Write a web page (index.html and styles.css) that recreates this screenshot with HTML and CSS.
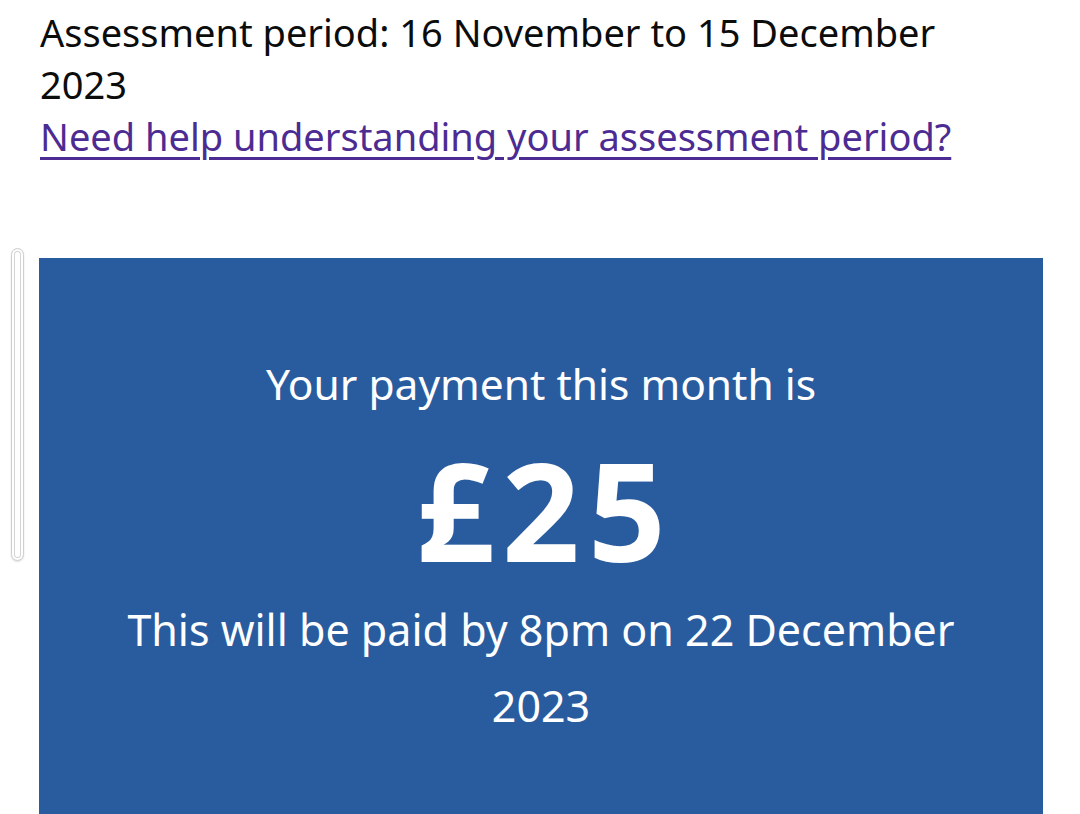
FILE: index.html
```html
<!DOCTYPE html>
<html lang="en">
<head>
<meta charset="utf-8">
<title>Your payment</title>
<link rel="stylesheet" href="styles.css">
</head>
<body>
<div class="scroll-thumb" aria-hidden="true"></div>
<main class="page">
  <p class="period">Assessment period: 16 November to 15 December 2023<br><a class="link" href="#">Need help understanding your assessment period?</a></p>
  <section class="panel">
    <p class="panel-lead">Your payment this month is</p>
    <p class="panel-amount">£25</p>
    <p class="panel-body">This will be paid by 8pm on 22 December 2023</p>
  </section>
</main>
</body>
</html>
```
FILE: styles.css
```css
html, body {
  margin: 0;
  padding: 0;
  background: #ffffff;
}
body {
  font-family: "Noto Sans", "Open Sans", sans-serif;
  color: #0b0c0c;
  overflow: hidden;
}
.page {
  padding: 6px 37px 0 39px;
}
.period {
  margin: 0 0 0 1px;
  max-width: 950px;
  font-size: 38px;
  line-height: 52px;
}
.link {
  color: #4c2c92;
  text-decoration: underline;
  text-decoration-thickness: 3px;
  text-underline-offset: 6px;
}
.panel {
  margin-top: 96px;
  background: #295c9f;
  color: #ffffff;
  text-align: center;
  padding: 96px 60px 70px;
}
.panel p {
  margin: 0;
}
.panel-lead {
  font-size: 42.5px;
  line-height: 60px;
  margin-bottom: 14px !important;
}
.panel-amount {
  font-size: 136px;
  font-weight: 700;
  line-height: 164px;
  letter-spacing: 8px;
  padding-left: 8px;
}
.panel-body {
  font-size: 43px;
  line-height: 76px;
}
.scroll-thumb {
  position: absolute;
  left: 11px;
  top: 248px;
  width: 11px;
  height: 311px;
  border: 1px solid #cfcfcf;
  border-radius: 7px;
  box-shadow: inset 0 0 0 2px #ffffff, inset 0 0 0 3px #d4d4d4, 0 1px 2px rgba(0,0,0,0.12);
  background: #ffffff;
}
```
